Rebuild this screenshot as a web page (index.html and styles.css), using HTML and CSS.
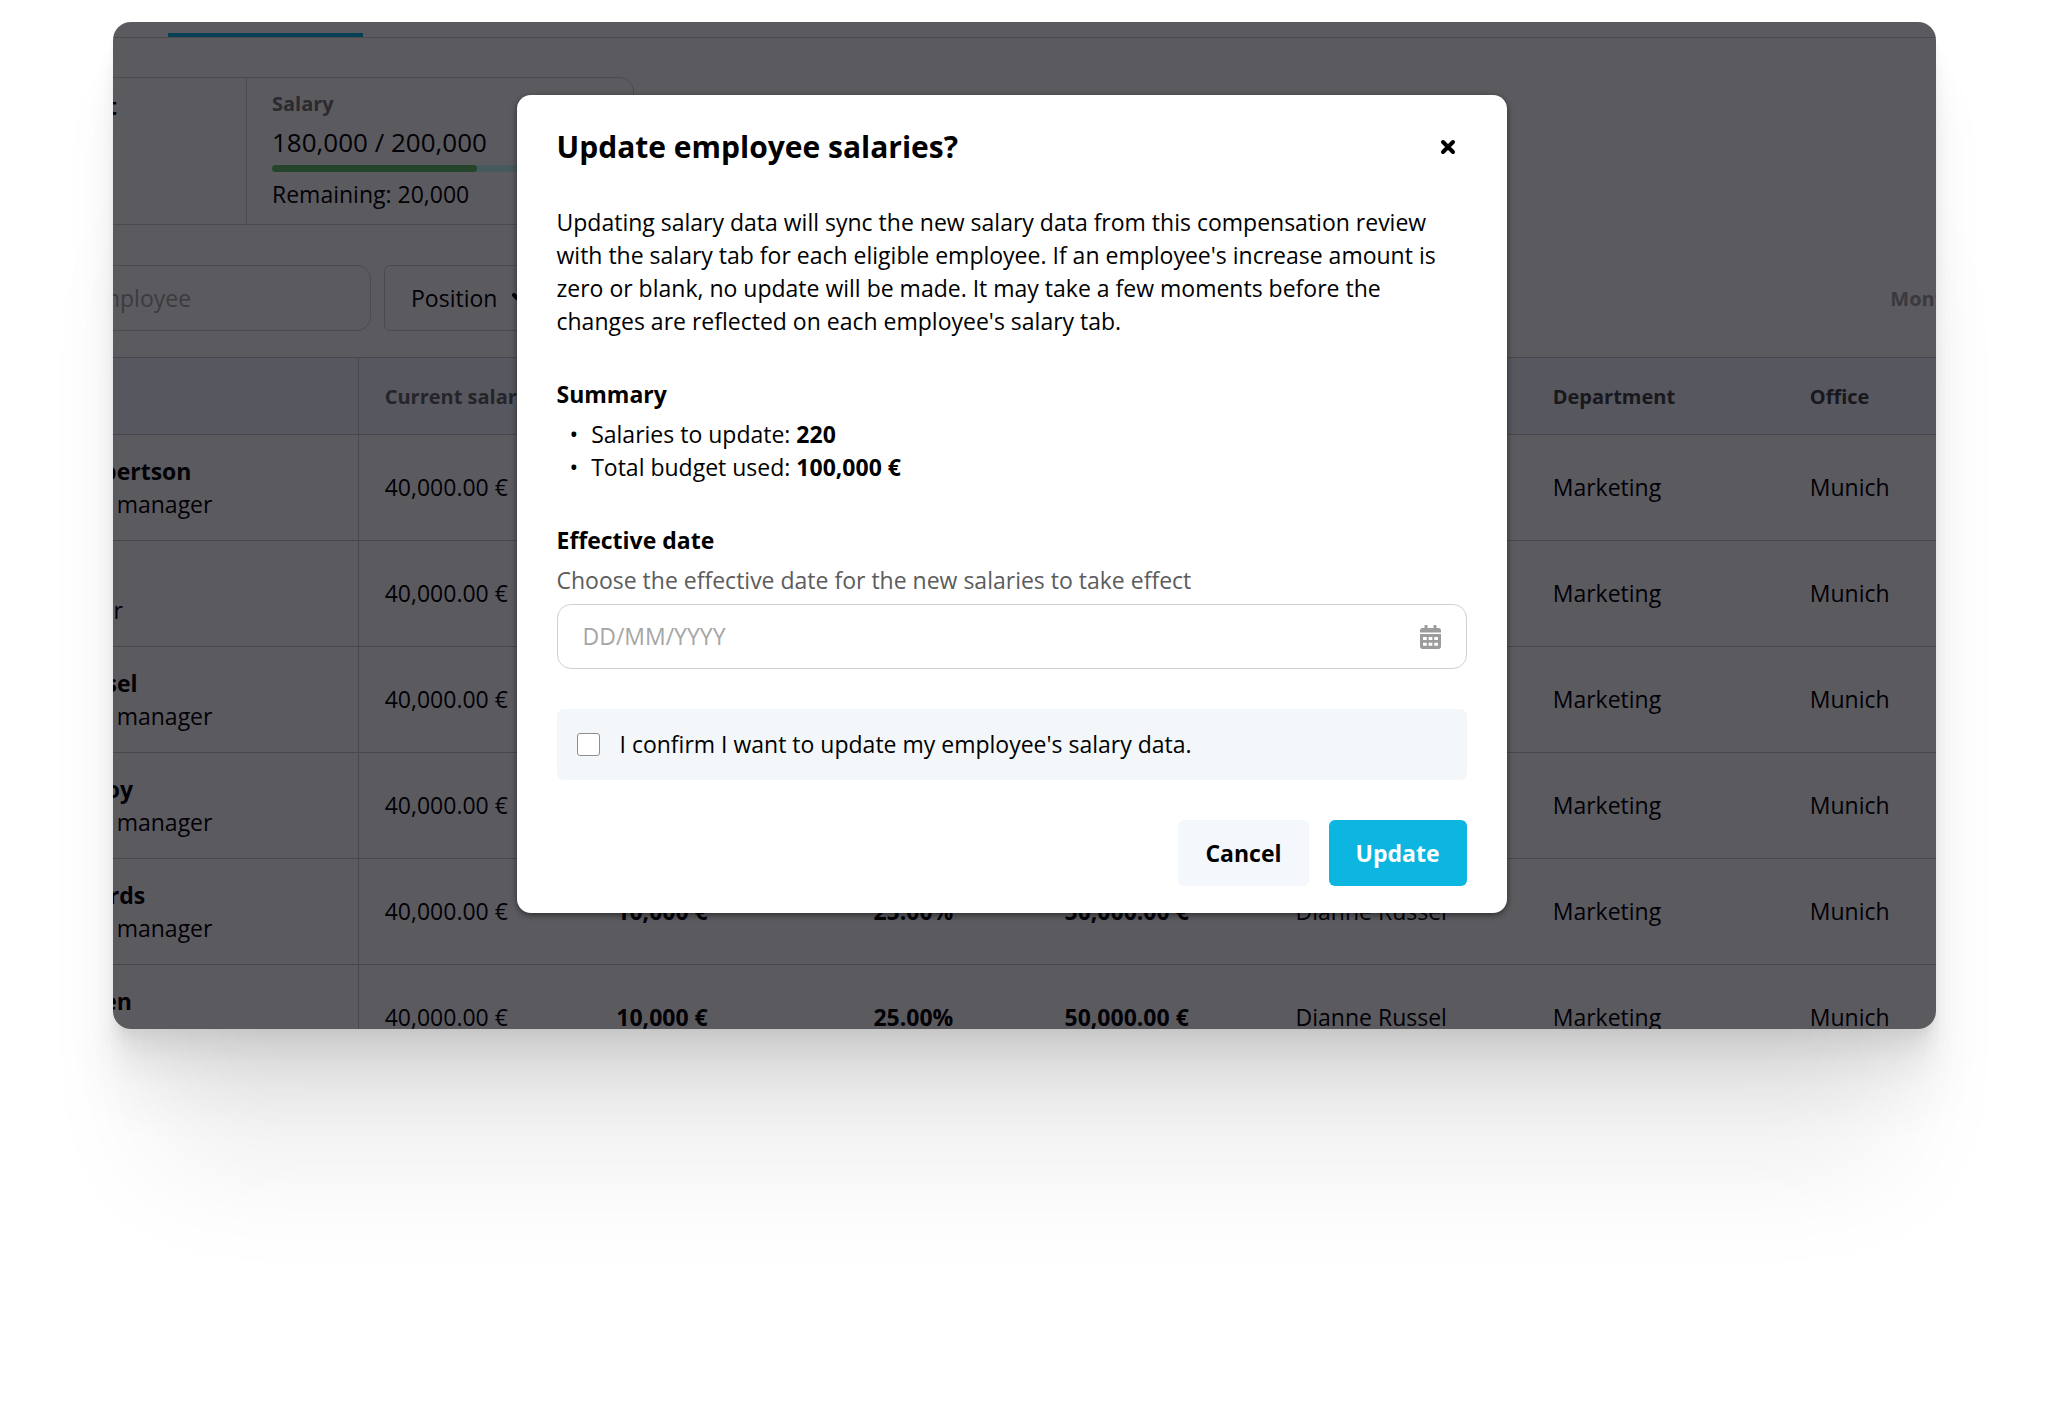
FILE: index.html
```
<!DOCTYPE html>
<html lang="en">
<head>
  <meta charset="UTF-8">
  <meta name="viewport" content="width=device-width, initial-scale=1.0">
  <title>Compensation review</title>
  <link rel="stylesheet" href="styles.css">
</head>
<body>
  <div class="window">
    <main class="app">
      <nav class="tabs">
        <div class="tab-active"></div>
      </nav>

      <section class="budgets">
        <div class="budget">
          <h2>Budget</h2>
        </div>
        <div class="budget budget-salary">
          <span class="budget-label">Salary</span>
          <span class="budget-value">180,000 / 200,000</span>
          <div class="bar"><div class="bar-fill"></div></div>
          <span>Remaining: 20,000</span>
        </div>
      </section>

      <div class="filters">
        <input class="search" type="text" placeholder="Search employee" aria-label="Search employee">
        <button class="filter" type="button">
          Position
          <svg width="16" height="10" viewBox="0 0 16 10"><path d="M2 2l6 6 6-6" fill="none" stroke="currentColor" stroke-width="4" stroke-linecap="round" stroke-linejoin="round"/></svg>
        </button>
        <span class="period">Monthly</span>
      </div>

      <table class="employees">
        <colgroup>
          <col class="col-name">
          <col class="col-current">
          <col class="col-wide">
          <col class="col-percent">
          <col class="col-new">
          <col class="col-wide">
          <col class="col-wide">
          <col class="col-wide">
        </colgroup>
        <thead>
          <tr>
            <th>Employee</th>
            <th class="muted">Current salary</th>
            <th>Increase</th>
            <th>Increase %</th>
            <th>New salary</th>
            <th>Manager</th>
            <th>Department</th>
            <th>Office</th>
          </tr>
        </thead>
        <tbody>
          <tr>
            <td><b>Darlene Robertson</b><br>Social media manager</td>
            <td>40,000.00 €</td>
            <td><b>10,000 €</b></td>
            <td><b>25.00%</b></td>
            <td><b>50,000.00 €</b></td>
            <td>Dianne Russel</td>
            <td>Marketing</td>
            <td>Munich</td>
          </tr>
          <tr>
            <td><b>Jane Fox</b><br>Web designer</td>
            <td>40,000.00 €</td>
            <td><b>10,000 €</b></td>
            <td><b>25.00%</b></td>
            <td><b>50,000.00 €</b></td>
            <td>Dianne Russel</td>
            <td>Marketing</td>
            <td>Munich</td>
          </tr>
          <tr>
            <td><b>Dianne Russel</b><br>Social media manager</td>
            <td>40,000.00 €</td>
            <td><b>10,000 €</b></td>
            <td><b>25.00%</b></td>
            <td><b>50,000.00 €</b></td>
            <td>Dianne Russel</td>
            <td>Marketing</td>
            <td>Munich</td>
          </tr>
          <tr>
            <td><b>Arlene McCoy</b><br>Social media manager</td>
            <td>40,000.00 €</td>
            <td><b>10,000 €</b></td>
            <td><b>25.00%</b></td>
            <td><b>50,000.00 €</b></td>
            <td>Dianne Russel</td>
            <td>Marketing</td>
            <td>Munich</td>
          </tr>
          <tr>
            <td><b>Ralph Edwards</b><br>Social media manager</td>
            <td>40,000.00 €</td>
            <td><b>10,000 €</b></td>
            <td><b>25.00%</b></td>
            <td><b>50,000.00 €</b></td>
            <td>Dianne Russel</td>
            <td>Marketing</td>
            <td>Munich</td>
          </tr>
          <tr>
            <td><b>Wade Warren</b><br>Social media manager</td>
            <td>40,000.00 €</td>
            <td><b>10,000 €</b></td>
            <td><b>25.00%</b></td>
            <td><b>50,000.00 €</b></td>
            <td>Dianne Russel</td>
            <td>Marketing</td>
            <td>Munich</td>
          </tr>
        </tbody>
      </table>
    </main>

    <div class="overlay">
      <form class="modal" role="dialog" aria-labelledby="modal-title">
        <header class="modal-header">
          <h1 id="modal-title">Update employee salaries?</h1>
          <button class="close" type="button" aria-label="Close">
            <svg width="18" height="18" viewBox="0 0 18 18"><path d="M4 4l10 10M14 4L4 14" stroke="currentColor" stroke-width="4" stroke-linecap="round"/></svg>
          </button>
        </header>

        <p class="intro">Updating salary data will sync the new salary data from this compensation review with the salary tab for each eligible employee. If an employee's increase amount is zero or blank, no update will be made. It may take a few moments before the changes are reflected on each employee's salary tab.</p>

        <section class="group">
          <h3>Summary</h3>
          <ul class="summary">
            <li><span>Salaries to update: <b>220</b></span></li>
            <li><span>Total budget used: <b>100,000 €</b></span></li>
          </ul>
        </section>

        <section class="group">
          <h3><label for="date">Effective date</label></h3>
          <p class="hint" id="date-hint">Choose the effective date for the new salaries to take effect</p>
          <div class="date-field">
            <input type="text" id="date" placeholder="DD/MM/YYYY" aria-describedby="date-hint">
            <svg class="calendar" width="21" height="24" viewBox="0 0 448 512"><path fill="currentColor" fill-rule="evenodd" d="M0 464c0 26 22 48 48 48h352c26 0 48-22 48-48V192H0zM64 256h80v64H64zM184 256h80v64h-80zM304 256h80v64h-80zM64 376h80v64H64zM184 376h80v64h-80zM304 376h80v64h-80zM400 64h-48V16c0-9-7-16-16-16h-32c-9 0-16 7-16 16v48H160V16c0-9-7-16-16-16h-32c-9 0-16 7-16 16v48H48C21 64 0 86 0 112v48h448v-48c0-26-21-48-48-48z"/></svg>
          </div>
        </section>

        <label class="confirm">
          <input type="checkbox">
          <span>I confirm I want to update my employee's salary data.</span>
        </label>

        <footer class="actions">
          <button class="btn" type="button">Cancel</button>
          <button class="btn btn-primary" type="submit">Update</button>
        </footer>
      </form>
    </div>
  </div>
</body>
</html>
```
FILE: styles.css
```
* {
  box-sizing: border-box;
}
body {
  min-height: 100vh;
  margin: 0;
  padding: 22px 112px 0 113px;
  background-color: #fff;
  color: #000;
  font-family: 'Open Sans', sans-serif;
  font-size: 23px;
  line-height: 33px;
}
h1, h2, h3, p, ul {
  margin: 0;
  padding: 0;
}
h3 {
  font-size: 23px;
}
b, h1, h2, h3, th {
  font-weight: 700;
}
input, button {
  font: inherit;
  color: inherit;
}

/* page behind the dialog, cropped by the window */
.window {
  position: relative;
  height: 1007px;
  overflow: hidden;
  border-radius: 18px;
  box-shadow:
    0 5px 4px rgba(0, 0, 0, 0.02),
    0 11px 9px rgba(0, 0, 0, 0.028),
    0 21px 17px rgba(0, 0, 0, 0.035),
    0 37px 30px rgba(0, 0, 0, 0.042),
    0 69px 55px rgba(0, 0, 0, 0.05),
    0 180px 120px -46px rgba(0, 0, 0, 0.07);
}
.app {
  margin-left: -168px;
  margin-right: -100px;
}
.tabs {
  display: flex;
  align-items: flex-end;
  height: 16px;
  padding-left: 223px;
  border-bottom: 1px solid #d0d0d0;
}
.tab-active {
  width: 195px;
  height: 4px;
  background-color: #0cb6e0;
}
.budgets {
  display: flex;
  width: 662px;
  height: 148px;
  margin: 39px 0 0 27px;
  border: 1px solid #d0d0d0;
  border-radius: 14px;
}
.budget {
  display: flex;
  flex-direction: column;
  width: 273px;
  padding: 9px 25px;
}
.budget h2 {
  align-self: flex-end;
  margin: 3px 104px 0 0;
  font-size: 23px;
}
.budget-salary {
  flex: 1;
  border-left: 1px solid #d0d0d0;
}
.budget-label {
  color: #757575;
  font-size: 20px;
  font-weight: 700;
}
.budget-value {
  margin: 6px 0;
  font-size: 26px;
}
.bar {
  height: 7px;
  margin-bottom: 6px;
  border-radius: 4px;
  background-color: #c2fbfb;
}
.bar-fill {
  width: 61%;
  height: 7px;
  border-radius: 4px;
  background-color: #66c46c;
}
.filters {
  display: flex;
  align-items: center;
  gap: 13px;
  margin: 40px 0 26px 27px;
}
.search, .filter {
  height: 66px;
  border: 1px solid #d0d0d0;
  border-radius: 14px;
  background-color: #fff;
}
.search {
  width: 399px;
  padding: 0 25px 0 34px;
}
.search::placeholder, .date-field input::placeholder {
  color: #a6a6a6;
  opacity: 1;
}
.filter {
  display: flex;
  align-items: center;
  gap: 15px;
  padding: 0 26px;
  border-radius: 6px;
}
.period {
  margin-left: auto;
  padding-right: 62px;
  color: #a0a0a0;
  font-size: 20px;
  font-weight: 700;
}

.employees {
  width: 2096px;
  table-layout: fixed;
  border-collapse: collapse;
}
.col-name { width: 413px; }
.col-current { width: 232px; }
.col-percent { width: 191px; }
.col-new { width: 231px; }
.col-wide { width: 257px; }
.employees th, .employees td {
  padding: 0 26px;
  border-top: 1px solid #c8c8c8;
  text-align: left;
  white-space: nowrap;
}
.employees th {
  height: 77px;
  background-color: #f2f6ff;
  color: #444;
  font-size: 20px;
  font-weight: 700;
}
.employees th.muted {
  color: #666;
}
.employees td {
  height: 106px;
}
.employees th:first-child, .employees td:first-child {
  padding-left: 31px;
  border-right: 1px solid #c8c8c8;
}

.overlay {
  position: absolute;
  top: 0;
  right: 0;
  bottom: 0;
  left: 0;
  display: flex;
  justify-content: center;
  align-items: flex-start;
  padding: 73px 26px 0 0;
  background-color: rgba(3, 1, 9, 0.65);
}
.modal {
  display: flex;
  flex-direction: column;
  gap: 40px;
  width: 100%;
  max-width: 990px;
  padding: 33px 40px 27px;
  border-radius: 14px;
  background-color: #fff;
  box-shadow: 0 2px 6px rgba(0, 0, 0, 0.5);
}
.modal-header {
  display: flex;
  justify-content: space-between;
  align-items: center;
}
.modal-header h1 {
  font-size: 30px;
  line-height: 38px;
}
.close {
  display: flex;
  justify-content: center;
  align-items: center;
  width: 38px;
  height: 38px;
  padding: 0;
  border: none;
  background: none;
  cursor: pointer;
}
.group {
  display: flex;
  flex-direction: column;
  gap: 7px;
}
.summary {
  list-style: none;
}
.summary li {
  display: flex;
  gap: 13px;
  padding-left: 13px;
}
.summary li::before {
  content: '•';
}
.hint {
  color: #5c5c5c;
}
.date-field {
  display: flex;
  align-items: center;
  height: 65px;
  padding: 0 25px;
  border: 1px solid #d0d0d0;
  border-radius: 14px;
}
.date-field input {
  flex: 1;
  min-width: 0;
  padding: 0;
  border: none;
  outline: none;
  background: none;
}
.calendar {
  color: #9c9c9c;
}
.confirm {
  display: flex;
  align-items: center;
  gap: 20px;
  padding: 19px 20px;
  border-radius: 7px;
  background-color: #f3f7fa;
}
.confirm input {
  appearance: none;
  width: 23px;
  height: 23px;
  margin: 0;
  border: 1px solid #8f8f8f;
  border-radius: 3px;
  background-color: #fff;
}
.actions {
  display: flex;
  justify-content: flex-end;
  gap: 20px;
}
.btn {
  height: 66px;
  padding: 0 27px;
  border: none;
  border-radius: 6px;
  background-color: #f4f7fb;
  font-weight: 700;
  cursor: pointer;
}
.btn-primary {
  background-color: #0cb6e0;
  color: #fff;
}
```
